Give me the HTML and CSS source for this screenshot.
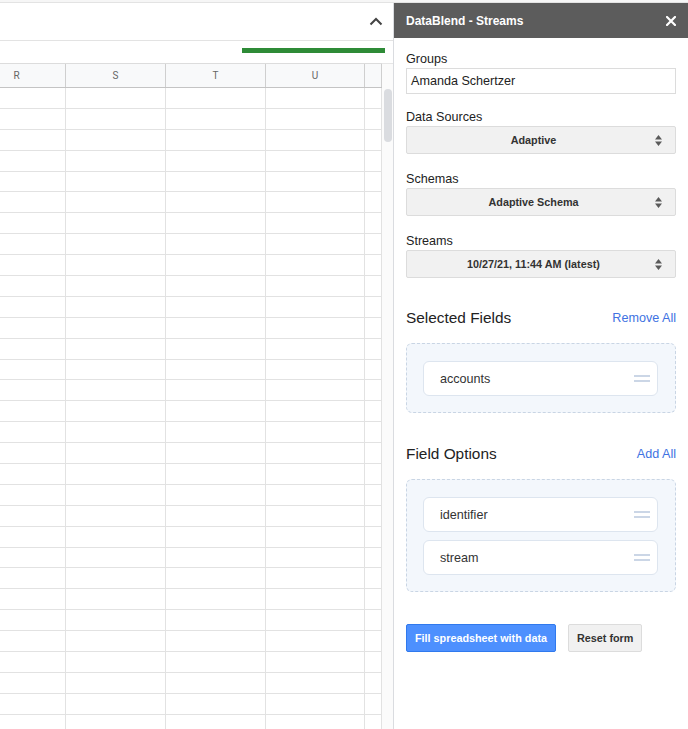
FILE: index.html
```html
<!DOCTYPE html>
<html>
<head>
<meta charset="utf-8">
<title>DataBlend - Streams</title>
<link rel="stylesheet" href="styles.css">
</head>
<body>
<div class="page">
  <div class="topstrip"></div>
  <div class="main">
    <div class="sheet">
      <div class="toolbar">
        <svg class="chevron" width="14" height="9" viewBox="0 0 14 9"><path d="M1.5 7.5 L7 2 L12.5 7.5" fill="none" stroke="#444" stroke-width="2"/></svg>
      </div>
      <div class="formula"><div class="progress"></div></div>
      <div class="grid">
        <div class="cells">
          <div class="colheads">
            <div class="colhead c1 first">R</div>
            <div class="colhead c2">S</div>
            <div class="colhead c3">T</div>
            <div class="colhead c4">U</div>
            <div class="colhead c5"></div>
          </div>
          <div class="rows">
            <div class="row"></div><div class="row"></div><div class="row"></div><div class="row"></div><div class="row"></div>
            <div class="row"></div><div class="row"></div><div class="row"></div><div class="row"></div><div class="row"></div>
            <div class="row"></div><div class="row"></div><div class="row"></div><div class="row"></div><div class="row"></div>
            <div class="row"></div><div class="row"></div><div class="row"></div><div class="row"></div><div class="row"></div>
            <div class="row"></div><div class="row"></div><div class="row"></div><div class="row"></div><div class="row"></div>
            <div class="row"></div><div class="row"></div><div class="row"></div><div class="row"></div><div class="row"></div>
            <div class="row"></div>
          </div>
        </div>
        <div class="vscroll"><div class="thumb"></div></div>
      </div>
    </div>
    <aside class="sidebar">
      <div class="sb-header">
        <span class="sb-title">DataBlend - Streams</span>
        <svg class="close" width="10" height="10" viewBox="0 0 10 10"><path d="M1 1 L9 9 M9 1 L1 9" stroke="#fff" stroke-width="2.2" stroke-linecap="square"/></svg>
      </div>
      <div class="sb-body">
        <label class="lbl">Groups</label>
        <div class="text-input">Amanda Schertzer</div>

        <label class="lbl">Data Sources</label>
        <div class="select"><span class="sel-text">Adaptive</span><svg class="arrows" width="7" height="11" viewBox="0 0 7 11"><path d="M0 4.5 L3.5 0 L7 4.5 Z M0 6.5 L7 6.5 L3.5 11 Z" fill="#5a5a5a"/></svg></div>

        <label class="lbl">Schemas</label>
        <div class="select"><span class="sel-text">Adaptive Schema</span><svg class="arrows" width="7" height="11" viewBox="0 0 7 11"><path d="M0 4.5 L3.5 0 L7 4.5 Z M0 6.5 L7 6.5 L3.5 11 Z" fill="#5a5a5a"/></svg></div>

        <label class="lbl">Streams</label>
        <div class="select"><span class="sel-text">10/27/21, 11:44 AM (latest)</span><svg class="arrows" width="7" height="11" viewBox="0 0 7 11"><path d="M0 4.5 L3.5 0 L7 4.5 Z M0 6.5 L7 6.5 L3.5 11 Z" fill="#5a5a5a"/></svg></div>

        <div class="section-head first-section">
          <span class="section-title">Selected Fields</span>
          <a class="link">Remove All</a>
        </div>
        <div class="dropzone">
          <div class="field"><span>accounts</span><span class="handle"></span></div>
        </div>

        <div class="section-head">
          <span class="section-title">Field Options</span>
          <a class="link">Add All</a>
        </div>
        <div class="dropzone">
          <div class="field"><span>identifier</span><span class="handle"></span></div>
          <div class="field"><span>stream</span><span class="handle"></span></div>
        </div>

        <div class="buttons">
          <button class="btn btn-blue">Fill spreadsheet with data</button>
          <button class="btn btn-gray">Reset form</button>
        </div>
      </div>
    </aside>
  </div>
</div>
</body>
</html>
```

FILE: styles.css
```css
* { box-sizing: border-box; }
html, body { margin: 0; padding: 0; background: #fff; }
body { font-family: "Liberation Sans", Arial, sans-serif; }

.page {
  width: 688px;
  height: 729px;
  overflow: hidden;
  display: flex;
  flex-direction: column;
}

.topstrip {
  height: 3px;
  background: #f6f6f6;
  border-bottom: 1px solid #e3e3e3;
  flex: none;
}

.main {
  flex: 1;
  display: flex;
  min-height: 0;
}

/* ---------- sheet ---------- */
.sheet {
  width: 393px;
  flex: none;
  display: flex;
  flex-direction: column;
}

.toolbar {
  height: 38px;
  border-bottom: 1px solid #e3e3e3;
  display: flex;
  align-items: center;
  justify-content: flex-end;
  padding-right: 10px;
  flex: none;
}

.formula {
  height: 22px;
  flex: none;
  display: flex;
  justify-content: flex-end;
}
.progress {
  width: 143px;
  height: 5px;
  margin-top: 7px;
  margin-right: 8px;
  background: #2e8b37;
}

.grid {
  flex: 1;
  display: flex;
  min-height: 0;
}
.cells {
  width: 382px;
  display: flex;
  flex-direction: column;
  overflow: hidden;
}

.colheads {
  display: flex;
  height: 25px;
  flex: none;
  background: #f8f9fa;
  border-top: 1px solid #dcdcdc;
  border-bottom: 1px solid #c4c4c4;
}
.colhead {
  border-right: 1px solid #cfcfcf;
  font-family: Roboto, "Liberation Sans", sans-serif;
  font-size: 10px;
  color: #666;
  display: flex;
  align-items: center;
  justify-content: center;
}
.c1 { width: 66px; }
.c2 { width: 100px; }
.c3 { width: 100px; }
.c4 { width: 99px; }
.c5 { width: 17px; }
.colhead.first { padding-right: 32px; }

.rows {
  flex: 1;
  background-image:
    linear-gradient(#e2e2e2, #e2e2e2),
    linear-gradient(#e2e2e2, #e2e2e2),
    linear-gradient(#e2e2e2, #e2e2e2),
    linear-gradient(#e2e2e2, #e2e2e2),
    linear-gradient(#e2e2e2, #e2e2e2);
  background-size: 1px 100%;
  background-repeat: no-repeat;
  background-position: 65px 0, 165px 0, 265px 0, 364px 0, 381px 0;
}
.row {
  height: 20.9px;
  border-bottom: 1px solid #e2e2e2;
}

.vscroll {
  width: 11px;
  background: #fbfbfb;
  border-top: 1px solid #e6e6e6;
  padding-top: 25px;
  padding-left: 2px;
}
.thumb {
  width: 8px;
  height: 53px;
  border-radius: 4px;
  background: #dadce0;
}

/* ---------- sidebar ---------- */
.sidebar {
  width: 295px;
  flex: none;
  border-left: 1px solid #dadce0;
  display: flex;
  flex-direction: column;
}

.sb-header {
  height: 35px;
  background: #5c5c5c;
  display: flex;
  align-items: center;
  justify-content: space-between;
  padding: 0 12px;
  flex: none;
}
.sb-title {
  color: #fff;
  font-weight: bold;
  font-size: 12px;
}

.sb-body {
  padding: 13px 12px 0;
  display: flex;
  flex-direction: column;
}

.lbl {
  display: block;
  font-size: 12.6px;
  line-height: 16px;
  color: #222;
  margin-bottom: 1px;
}

.text-input {
  height: 26px;
  border: 1px solid #dcdcdc;
  padding: 0 4px;
  font-size: 12.6px;
  line-height: 24px;
  color: #222;
  margin-bottom: 15px;
}

.select {
  height: 28px;
  border: 1px solid #dcdcdc;
  border-radius: 2px;
  background: #f1f1f1;
  display: flex;
  align-items: center;
  padding: 0 13px 0 8px;
  margin-bottom: 17px;
}
.sel-text {
  flex: 1;
  text-align: center;
  font-weight: bold;
  font-size: 10.8px;
  color: #333;
}
.arrows { margin-left: 3px; flex: none; }

.section-head {
  height: 20px;
  display: flex;
  align-items: center;
  justify-content: space-between;
  margin-top: 31px;
  margin-bottom: 15px;
}
.section-head.first-section { margin-top: 13px; }
.section-title {
  font-size: 15.4px;
  color: #222;
}
.link {
  font-size: 12.6px;
  color: #4072e2;
  cursor: pointer;
}

.dropzone {
  border: 1px dashed #c9d5e4;
  border-radius: 6px;
  background: #f3f7fc;
  padding: 17px 17px 16px 16px;
  display: flex;
  flex-direction: column;
  gap: 8px;
}

.field {
  height: 35px;
  background: #fff;
  border: 1px solid #dde5ef;
  border-radius: 6px;
  display: flex;
  align-items: center;
  justify-content: space-between;
  padding: 0 7px 0 16px;
  font-size: 12.6px;
  color: #333;
}
.handle {
  width: 16px;
  height: 7px;
  border-top: 2px solid #cbd6e6;
  border-bottom: 2px solid #cbd6e6;
}

.buttons {
  display: flex;
  gap: 12px;
  margin-top: 32px;
}
.btn {
  height: 28px;
  padding: 0 8px;
  border-radius: 2px;
  font-family: "Liberation Sans", Arial, sans-serif;
  font-weight: bold;
  font-size: 10.8px;
  border: 1px solid;
}
.btn-blue {
  background: #4d90fe;
  border-color: #3079ed;
  color: #fff;
}
.btn-gray {
  background: #f1f1f1;
  border-color: #dcdcdc;
  color: #333;
}
```
